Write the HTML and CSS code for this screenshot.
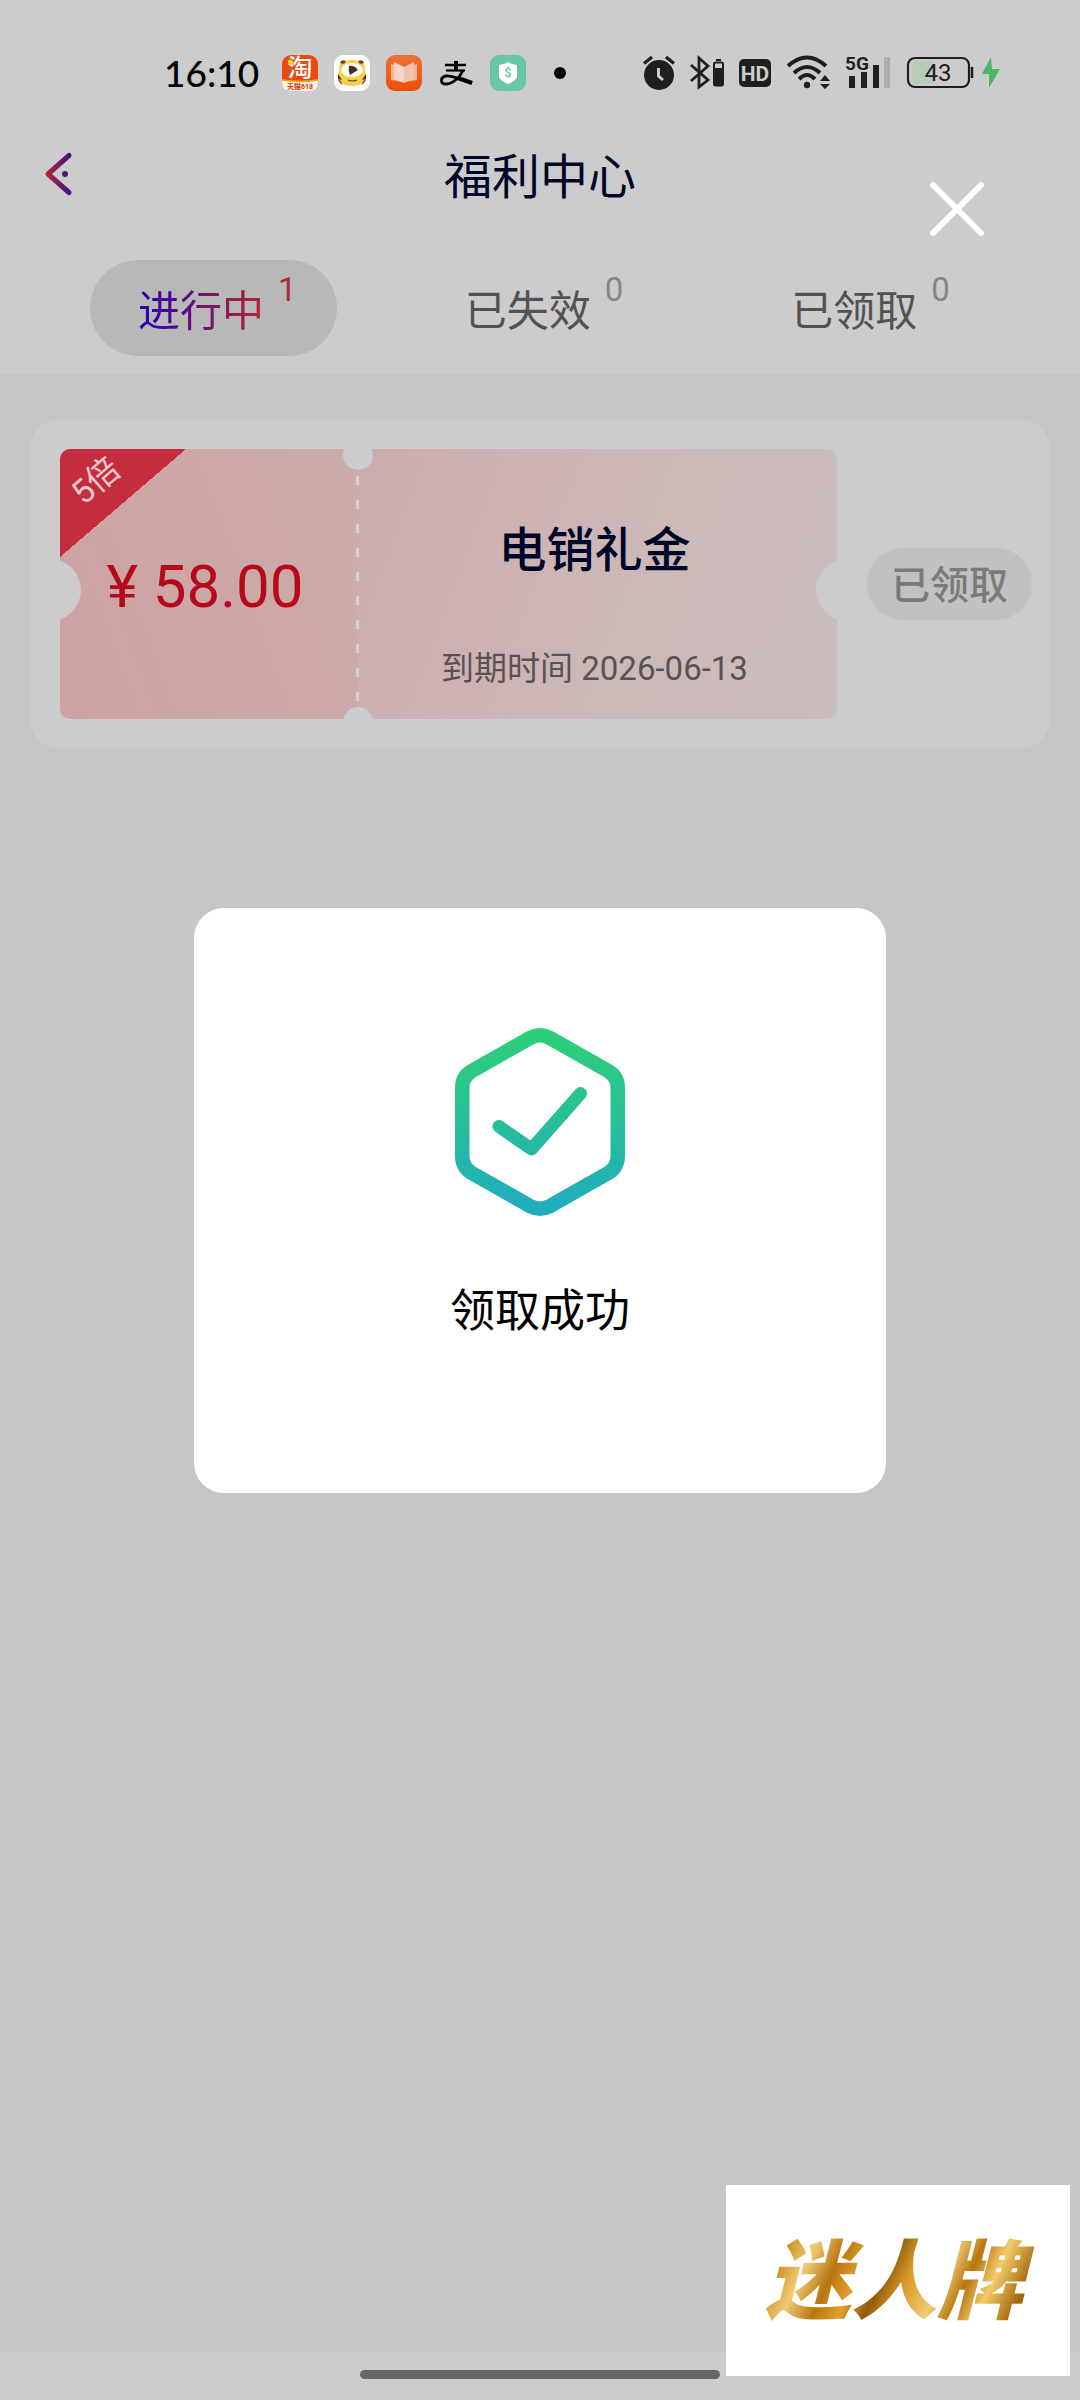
FILE: index.html
```html
<!DOCTYPE html>
<html lang="zh-CN">

<head>
    <meta charset="UTF-8">
    <meta name="viewport" content="width=device-width, initial-scale=1.0">
    <title>福利中心</title>
    <link rel="stylesheet" href="styles.css">
</head>

<body>

    <div class="page">
        <header class="header">
            <div class="status">
                <div class="status-left">
                    <span class="time">16:10</span>
                    <div class="apps">
                        <svg width="36" height="36" viewBox="0 0 36 36">
                            <rect width="36" height="36" rx="9" fill="#e84c12" />
                            <path d="M0 25 Q18 28 36 25 V27 Q36 36 27 36 H9 Q0 36 0 27Z" fill="#fff3e8" />
                            <path d="M0 25 Q18 28 36 25" stroke="#f6a722" stroke-width="1.5" fill="none" />
                            <text class="ico-tao" x="18" y="22" text-anchor="middle">淘</text>
                            <circle cx="8.500" cy="7" r="2.500" fill="#ffd21c" />
                            <text class="ico-sale" x="18" y="34" text-anchor="middle">天猫618</text>
                        </svg>
                        <svg width="36" height="36" viewBox="0 0 36 36">
                            <rect width="36" height="36" rx="9" fill="#fff" />
                            <path d="M6 8 Q7 4 12 6 Q18 4 24 6 Q29 4 30 8 L31 16 Q34 31 18 31 Q2 31 5 16Z" fill="#f5cf45" />
                            <path d="M6 8 Q7 4 12 6 L10 9Z M30 8 Q29 4 24 6 L26 9Z" fill="#6b4a22" />
                            <path d="M4 19 l4 6 l-3 -1 l4 6 Q3 27 4 19Z M32 19 l-4 6 l3 -1 l-4 6 Q33 27 32 19Z" fill="#4a3218" />
                            <ellipse cx="18" cy="15" rx="11" ry="7" fill="#fff" />
                            <path d="M15 11 Q20 10 24 15 L16 20 Q14 16 15 11Z" fill="#4a2d20" />
                            <path d="M14 25 Q18 27 23 25" stroke="#4a3218" stroke-width="1.200" fill="none" />
                        </svg>
                        <svg width="36" height="36" viewBox="0 0 36 36">
                            <defs>
                                <linearGradient id="book" x1="0" y1="0" x2="0" y2="1">
                                    <stop offset="0" stop-color="#ea7434" />
                                    <stop offset="1" stop-color="#f04e0a" />
                                </linearGradient>
                            </defs>
                            <rect width="36" height="36" rx="9" fill="url(#book)" />
                            <path d="M5 9 L18 12 L31 9 V25 L18 27 L5 25Z" fill="#f5b495" />
                            <path d="M8 7 L18 12 V28 L8 24Z" fill="#f6d5c8" />
                            <path d="M28 7 L18 12 V28 L28 24Z" fill="#f0c3b0" />
                        </svg>
                        <svg width="36" height="36" viewBox="0 0 36 36" fill="none" stroke="#000">
                            <path d="M7 10 H28" stroke-width="2.500" />
                            <path d="M18 6 V16" stroke-width="4" />
                            <path d="M8 15.500 H27" stroke-width="2.200" />
                            <path d="M25 15 C22 23 14 29 8 29 C2 29 2 22 8 21 C14 20 22 25 34 28" stroke-width="2.800" />
                            <path d="M20 23 L34 28" stroke-width="4.500" />
                        </svg>
                        <svg width="36" height="36" viewBox="0 0 36 36">
                            <rect width="36" height="36" rx="9" fill="#67c7a5" />
                            <path d="M18 7 Q22 10 27 10 V22 Q26 26 18 29 Q10 26 9 22 V10 Q14 10 18 7Z" fill="#fff" />
                            <text class="ico-coin" x="18" y="22" text-anchor="middle">$</text>
                        </svg>
                    </div>
                    <span class="more"></span>
                </div>
                <div class="status-right">
                    <svg width="34" height="36" viewBox="0 0 34 36">
                        <circle cx="17" cy="20" r="15" fill="#1f1f1f" />
                        <path d="M2 8.500 L10 2 M24 2 L32 8.500" stroke="#1f1f1f" stroke-width="3.200" />
                        <path d="M16.500 13 V21 L21 25" stroke="#ccc" stroke-width="3" fill="none" />
                    </svg>
                    <svg width="34" height="36" viewBox="0 0 34 36" fill="none" stroke="#1f1f1f" stroke-width="2.800">
                        <path d="M1 10 L18 25 L9 32 V3 L18 11 L1 26" />
                        <rect x="24" y="7.500" width="9" height="23" rx="1.500" stroke-width="2" />
                        <path d="M24 13 H33 V30 H24Z" fill="#1f1f1f" stroke="none" />
                        <path d="M26 5 H31" stroke-width="2" />
                    </svg>
                    <svg width="34" height="36" viewBox="0 0 34 36">
                        <rect x="1" y="4" width="32" height="28" rx="5" fill="#1f1f1f" />
                        <text class="ico-hd" x="17" y="26" text-anchor="middle">HD</text>
                    </svg>
                    <svg width="46" height="36" viewBox="0 0 46 36" fill="none" stroke="#1f1f1f" stroke-width="4">
                        <path d="M2 11 Q21 -6 40 11" />
                        <path d="M8 18 Q21 6 34 18" />
                        <path d="M13 24 Q21 16 29 24" />
                        <circle cx="21" cy="30" r="3.200" fill="#1f1f1f" stroke="none" />
                        <path d="M39 20 l5 6 h-10Z M39 34 l-5 -5 h10Z" fill="#1f1f1f" stroke="none" />
                    </svg>
                    <svg width="46" height="36" viewBox="0 0 46 36">
                        <text class="ico-net" x="-1" y="15">5G</text>
                        <rect x="3" y="21" width="6" height="12" fill="#1f1f1f" />
                        <rect x="15" y="17" width="6" height="16" fill="#1f1f1f" />
                        <rect x="27" y="10" width="6" height="23" fill="#1f1f1f" />
                        <rect x="38" y="2" width="6" height="31" fill="#adadad" />
                    </svg>
                    <div class="power">
                        <svg width="68" height="36" viewBox="0 0 68 36">
                            <path d="M11 6 H27 V29 H11 Q6 29 6 24 V11 Q6 6 11 6Z" fill="#b5ccb9" />
                            <rect x="2" y="3" width="61" height="29" rx="7" fill="none" stroke="#1f1f1f" stroke-width="2.200" />
                            <path d="M66 12 V23" stroke="#1f1f1f" stroke-width="2.500" />
                            <text class="ico-level" x="32" y="26" text-anchor="middle">43</text>
                        </svg>
                        <svg width="18" height="36" viewBox="0 0 18 36">
                            <path d="M9 2 L0 19 H7 V33 L18 14 H10Z" fill="#4cb865" />
                        </svg>
                    </div>
                </div>
            </div>

            <div class="nav">
                <button class="back" type="button" aria-label="返回">
                    <svg width="30" height="44" viewBox="0 0 30 44" fill="none">
                        <defs>
                            <linearGradient id="arrow" x1="3" y1="0" x2="28" y2="0" gradientUnits="userSpaceOnUse">
                                <stop offset="0" stop-color="#b5242f" />
                                <stop offset="1" stop-color="#35128a" />
                            </linearGradient>
                        </defs>
                        <path d="M25 3.500 L4 22 L25 40.500" stroke="url(#arrow)" stroke-width="5" stroke-linecap="round" stroke-linejoin="round" />
                        <circle cx="21" cy="22" r="3" fill="#4c1a72" />
                    </svg>
                </button>
                <h1>福利中心</h1>
            </div>

            <div class="tabs">
                <button class="tab on" type="button"><span>进行中</span><sup>1</sup></button>
                <button class="tab" type="button"><span>已失效</span><sup>0</sup></button>
                <button class="tab" type="button"><span>已领取</span><sup>0</sup></button>
            </div>
        </header>

        <main class="list">
            <div class="card">
                <div class="coupon">
                    <div class="amount">¥ 58.00</div>
                    <div class="info">
                        <h2>电销礼金</h2>
                        <p>到期时间 2026-06-13</p>
                    </div>
                    <div class="ribbon"><span>5倍</span></div>
                    <i class="line"></i>
                    <i class="hole hole-left"></i>
                    <i class="hole hole-right"></i>
                    <i class="hole hole-top"></i>
                    <i class="hole hole-bottom"></i>
                </div>
                <button class="claimed" type="button" disabled>已领取</button>
            </div>
        </main>

        <footer class="home"><span></span></footer>
    </div>

    <div class="mask">
        <button class="close" type="button" aria-label="关闭">
            <svg width="56" height="56" viewBox="0 0 56 56">
                <path d="M4 4 L52 52 M52 4 L4 52" stroke="#fff" stroke-width="6" stroke-linecap="round" />
            </svg>
        </button>
        <div class="dialog" role="dialog" aria-labelledby="msg">
            <svg width="170" height="188" viewBox="0 0 170 188" fill="none" stroke="url(#ok)">
                <defs>
                    <linearGradient id="ok" x1="0" y1="0" x2="0" y2="188" gradientUnits="userSpaceOnUse">
                        <stop offset="0" stop-color="#2dd077" />
                        <stop offset="0.5" stop-color="#28be9a" />
                        <stop offset="1" stop-color="#20abc0" />
                    </linearGradient>
                </defs>
                <path d="M76 9.500 Q85 5 94 9.500 L154 43.500 Q162.750 49 162.750 60 V128 Q162.750 139 154 144.500 L94 178.500 Q85 183 76 178.500 L16 144.500 Q7.250 139 7.250 128 V60 Q7.250 49 16 43.500Z" stroke-width="14.500" />
                <path d="M44 98.500 L76.500 121 L125.500 65.500" stroke-width="13" stroke-linecap="round" stroke-linejoin="round" />
            </svg>
            <p id="msg">领取成功</p>
        </div>
    </div>

    <div class="brand">迷人牌</div>

</body>

</html>
```
FILE: styles.css
```css
/* css reset START */
* {
    margin: 0;
    padding: 0;
    box-sizing: border-box;
}

body {
    font-family: Roboto, "Noto Sans CJK SC", sans-serif;
    background-color: #c6c6c6;
}

button {
    border: none;
    background: none;
    font-family: inherit;
    cursor: pointer;
}

svg {
    display: block;
    flex-shrink: 0;
    overflow: visible;
}

/* css reset END */

.page {
    min-height: 100vh;
    display: flex;
    flex-direction: column;
}

.header {
    background-color: #ccc;
    padding-bottom: 18px;
}

/* status START */
.status {
    height: 146px;
    padding: 0 80px 0 164px;
    display: flex;
    align-items: center;
    justify-content: space-between;
}

.status-left,
.status-right,
.apps,
.power {
    display: flex;
    align-items: center;
}

.status-left {
    gap: 24px;
}

.status-right {
    gap: 14px;
}

.apps {
    gap: 16px;
}

.power {
    gap: 8px;
}

.time {
    width: 94px;
    font-family: Lato, sans-serif;
    font-size: 37px;
    font-weight: 500;
    line-height: 40px;
    white-space: nowrap;
}

.more {
    width: 12px;
    height: 12px;
    margin-left: 4px;
    border-radius: 50%;
    background-color: #000;
}

.ico-tao {
    font-size: 25px;
    font-weight: 500;
    fill: #fff;
}

.ico-sale {
    font-size: 7px;
    font-weight: 700;
    fill: #d8330f;
}

.ico-coin {
    font-size: 12px;
    font-weight: 500;
    fill: #67c7a5;
}

.ico-hd {
    font-size: 21px;
    font-weight: 700;
    fill: #ccc;
}

.ico-net {
    font-size: 19px;
    font-weight: 700;
    fill: #1f1f1f;
}

.ico-level {
    font-size: 24px;
    fill: #1f1f1f;
}

/* status END */

/* nav START */
.nav {
    height: 60px;
    padding: 0 44px;
    display: grid;
    grid-template-columns: 1fr auto 1fr;
    align-items: start;
}

.back {
    width: 30px;
    margin-top: 6px;
}

.nav h1 {
    font-size: 48px;
    font-weight: 400;
    line-height: 64px;
    color: #000628;
}

/* nav END */

/* tabs START */
.tabs {
    margin-top: 54px;
    padding: 0 90px;
    display: grid;
    grid-template-columns: repeat(3, 1fr);
    gap: 80px;
}

.tab {
    height: 96px;
    padding: 8px 0 0 48px;
    display: flex;
    align-items: center;
    gap: 14px;
    border-radius: 48px;
    font-size: 42px;
    line-height: 60px;
    color: #525252;
    white-space: nowrap;
}

.tab sup {
    font-size: 33px;
    line-height: 40px;
    padding-bottom: 44px;
    color: #858585;
}

.on {
    background-color: #b8b8b8;
}

.on span {
    background: linear-gradient(90deg, #2400b4, #b8242f);
    -webkit-background-clip: text;
    background-clip: text;
    color: transparent;
}

.on sup {
    color: #b52a35;
}

/* tabs END */

/* card START */
.list {
    flex: 1;
    padding: 45px 30px;
}

.card {
    padding: 30px 18px 30px 30px;
    display: flex;
    align-items: center;
    gap: 30px;
    border-radius: 30px;
    background-color: #ccc;
}

.coupon {
    flex: 1;
    display: grid;
    grid-template-columns: 298px 1fr;
    position: relative;
    overflow: hidden;
    border-radius: 10px;
}

.amount {
    padding: 6px 8px 0 0;
    display: flex;
    align-items: center;
    justify-content: center;
    font-size: 60px;
    line-height: 70px;
    color: #b60a1c;
    background: linear-gradient(70deg, #cea1a2, #cbacaa);
}

.info {
    padding: 72px 6px 30px 0;
    display: flex;
    flex-direction: column;
    align-items: center;
    gap: 68px;
    background: linear-gradient(110deg, #cbacad, #ceb1b3 30%, #cbb9b8 60%, #ccbdbc);
}

.info h2 {
    font-size: 48px;
    font-weight: 500;
    line-height: 60px;
    color: #000628;
}

.info p {
    font-size: 33px;
    line-height: 40px;
    color: #5a5252;
}

.claimed {
    width: 165px;
    height: 72px;
    padding-top: 4px;
    border-radius: 36px;
    font-size: 39px;
    font-weight: 500;
    line-height: 60px;
    color: #7b7b7b;
    background-color: #c1c1c1;
}

/* card END */

/* coupon decoration START */
.ribbon {
    width: 126px;
    height: 108px;
    position: absolute;
    top: 0;
    left: 0;
    background: linear-gradient(to bottom right, #c32d3e 50%, transparent 50%);
}

.ribbon span {
    position: absolute;
    top: 15px;
    left: 10px;
    font-size: 33px;
    line-height: 33px;
    white-space: nowrap;
    color: #f3c9ce;
    transform: rotate(-41deg);
}

.line {
    width: 3px;
    position: absolute;
    top: 27px;
    bottom: 16px;
    left: 296px;
    background: repeating-linear-gradient(#d6d0d0 0 9px, transparent 9px 24px);
}

.hole {
    position: absolute;
    border-radius: 50%;
    background-color: #ccc;
}

.hole-left,
.hole-right {
    width: 62px;
    height: 62px;
    top: 110px;
}

.hole-left {
    left: -41px;
}

.hole-right {
    right: -41px;
}

.hole-top,
.hole-bottom {
    width: 30px;
    height: 30px;
    left: 283px;
}

.hole-top {
    top: -9px;
}

.hole-bottom {
    bottom: -18px;
}

/* coupon decoration END */

/* home bar START */
.home {
    height: 48px;
    padding-top: 18px;
    background-color: #ccc;
}

.home span {
    display: block;
    width: 360px;
    height: 9px;
    margin: 0 auto;
    border-radius: 5px;
    background-color: #666;
}

/* home bar END */

/* dialog START */
.mask {
    position: fixed;
    inset: 0;
    display: flex;
    align-items: center;
    justify-content: center;
}

.close {
    position: absolute;
    top: 181px;
    right: 95px;
}

.dialog {
    width: 64%;
    padding: 120px 30px 151px;
    display: flex;
    flex-direction: column;
    align-items: center;
    gap: 66px;
    border-radius: 30px;
    background-color: #fff;
}

.dialog p {
    font-size: 45px;
    line-height: 60px;
    color: #000;
}

/* dialog END */

/* brand START */
.brand {
    width: 344px;
    height: 191px;
    padding-right: 8px;
    position: fixed;
    right: 10px;
    bottom: 24px;
    font-size: 86px;
    font-weight: 900;
    font-style: italic;
    line-height: 195px;
    text-align: center;
    color: transparent;
    background:
        linear-gradient(115deg, #a8690c, #c98a1c 20%, #f0cb74 27%, #b8750f 34%, #e0a02c 40%, #8f5a0a 46%, #d99a26 52%, #f0cb74 60%, #b8750f 66%, #f2cc6a 72%, #a4660c 80%) text,
        #fff;
}

/* brand END */
```
